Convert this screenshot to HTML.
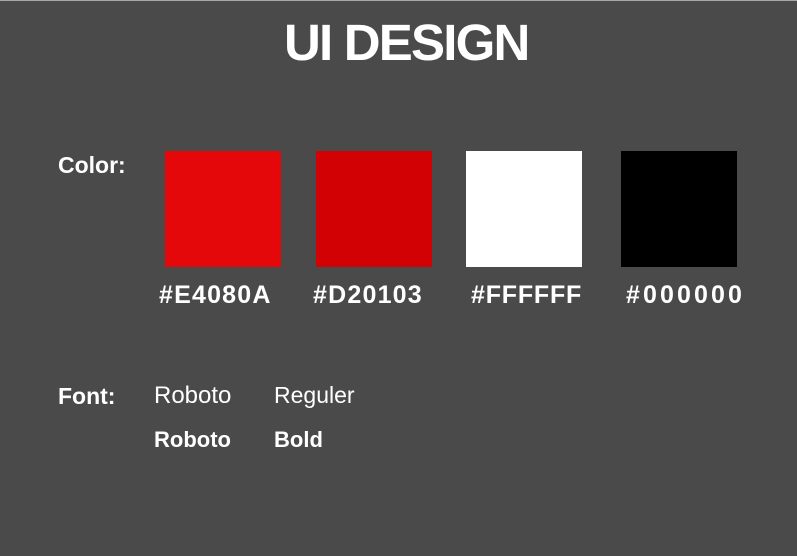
<!DOCTYPE html>
<html><head><style>
html,body{margin:0;padding:0}
body{width:797px;height:556px;background:#4a4a4a;position:relative;overflow:hidden;font-family:"Liberation Sans",Arial,sans-serif;color:#fff}
.t{position:absolute;line-height:1;white-space:nowrap}
.b{font-weight:bold}
.sq{position:absolute;top:151px;width:116px;height:116px}
.topline{position:absolute;left:0;top:0;width:797px;height:1px;background:#a8a8a8}
</style></head><body>
<div class="topline"></div>
<div class="t b" style="left:284px;top:17px;font-size:51px;letter-spacing:-1.8px">UI DESIGN</div>
<div class="t b" style="left:58px;top:154px;font-size:23px">Color:</div>
<div class="sq" style="left:165px;background:#e4080a"></div>
<div class="sq" style="left:316px;background:#d20103"></div>
<div class="sq" style="left:466px;background:#ffffff"></div>
<div class="sq" style="left:621px;background:#000000"></div>
<div class="t b" style="left:159px;top:283px;font-size:25px;letter-spacing:1.2px">#E4080A</div>
<div class="t b" style="left:313px;top:283px;font-size:25px;letter-spacing:1.2px">#D20103</div>
<div class="t b" style="left:471px;top:283px;font-size:25px;letter-spacing:0.8px">#FFFFFF</div>
<div class="t b" style="left:626px;top:283px;font-size:25px;letter-spacing:3.1px">#000000</div>
<div class="t b" style="left:58px;top:385px;font-size:23px">Font:</div>
<div class="t" style="left:154px;top:384px;font-size:24px">Roboto</div>
<div class="t" style="left:274px;top:384px;font-size:23px">Reguler</div>
<div class="t b" style="left:154px;top:429px;font-size:22px">Roboto</div>
<div class="t b" style="left:274px;top:429px;font-size:22px">Bold</div>
</body></html>
